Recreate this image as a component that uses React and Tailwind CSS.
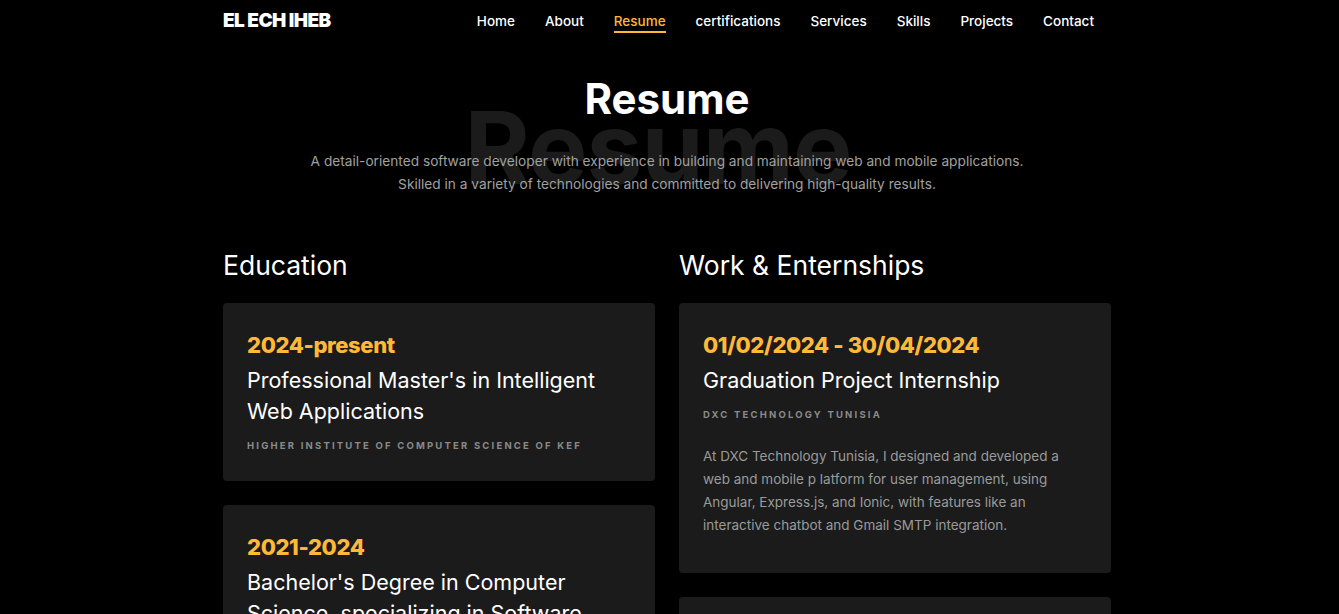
import React from "react";

const navItems = ["Home", "About", "Resume", "certifications", "Services", "Skills", "Projects", "Contact"];

function Card({ date, title, org, children }) {
  return (
    <div className="rounded-[4px] bg-[#1b1b1b] px-6 pt-[27px] pb-[27px]">
      <div className="text-[22px] leading-[30px] font-extrabold text-[#ffb938] tracking-[-0.4px]">{date}</div>
      <div className="mt-[5px] text-[21.5px] leading-[31px] text-white">{title}</div>
      <div className="mt-[11px] text-[9.5px] leading-[16px] font-bold uppercase tracking-[2.2px] text-[#8a8a8a]">{org}</div>
      {children}
    </div>
  );
}

export default function App() {
  return (
    <div className="min-h-screen bg-black pr-[5px] font-['Inter','Noto_Sans',sans-serif] text-white overflow-hidden">
      <div className="mx-auto w-[888px]">
        <header className="flex h-10 items-center justify-between pt-[2px]">
          <div className="text-[19px] font-black tracking-[-0.6px] text-white">EL ECH IHEB</div>
          <nav className="mr-[17px] flex items-center gap-[30px] text-[13.5px] font-medium">
            {navItems.map((item) => (
              <span key={item} className={"relative " + (item === "Resume" ? "text-[#ffb938]" : "text-white")}>
                {item}
                {item === "Resume" && (
                  <span className="absolute left-0 right-0 top-[20px] h-[2px] bg-[#ffb938]" />
                )}
              </span>
            ))}
          </nav>
        </header>

        <section className="relative mt-[35px] flex flex-col items-center">
          <div className="pointer-events-none absolute left-[calc(50%-9px)] top-[23px] -translate-x-1/2 select-none whitespace-nowrap text-[100px] font-bold leading-none tracking-[-1px] text-[#1b1b1b]">
            Resume
          </div>
          <h2 className="relative z-10 text-[42px] font-bold leading-[48px] tracking-[0px] text-white">Resume</h2>
          <p className="relative z-10 mt-[27px] text-center text-[13.7px] leading-[23px] text-[#a0a0a0]">
            A detail-oriented software developer with experience in building and maintaining web and mobile applications.
            <br />
            Skilled in a variety of technologies and committed to delivering high-quality results.
          </p>
        </section>

        <div className="mt-[52px] grid grid-cols-2 gap-6">
          <div>
            <h3 className="text-[26.5px] leading-[34px] font-normal text-white">Education</h3>
            <div className="mt-[21px] flex flex-col gap-6">
              <Card
                date="2024-present"
                title={<>Professional Master's in Intelligent<br />Web Applications</>}
                org="Higher Institute of Computer Science of Kef"
              />
              <Card
                date="2021-2024"
                title={<>Bachelor's Degree in Computer<br />Science, specializing in Software<br />Engineering</>}
                org="Higher Institute of Computer Science of Kef"
              />
            </div>
          </div>
          <div>
            <h3 className="text-[26.5px] leading-[34px] font-normal text-white">Work &amp; Enternships</h3>
            <div className="mt-[21px] flex flex-col gap-6">
              <div className="rounded-[4px] bg-[#1b1b1b] px-6 pt-[27px] pb-[36px]">
                <div className="text-[22px] leading-[30px] font-extrabold text-[#ffb938] tracking-[-0.4px]">01/02/2024 - 30/04/2024</div>
                <div className="mt-[5px] text-[21.5px] leading-[31px] text-white">Graduation Project Internship</div>
                <div className="mt-[11px] text-[9.5px] leading-[16px] font-bold uppercase tracking-[2.2px] text-[#8a8a8a]">DXC Technology Tunisia</div>
                <p className="mt-[22px] text-[13.5px] leading-[23px] text-[#9a9a9a]">
                  At DXC Technology Tunisia, I designed and developed a<br />
                  web and mobile p latform for user management, using<br />
                  Angular, Express.js, and Ionic, with features like an<br />
                  interactive chatbot and Gmail SMTP integration.
                </p>
              </div>
              <Card
                date="01/07/2023 - 31/08/2023"
                title="Summer Internship"
                org="Company"
              />
            </div>
          </div>
        </div>
      </div>
    </div>
  );
}
